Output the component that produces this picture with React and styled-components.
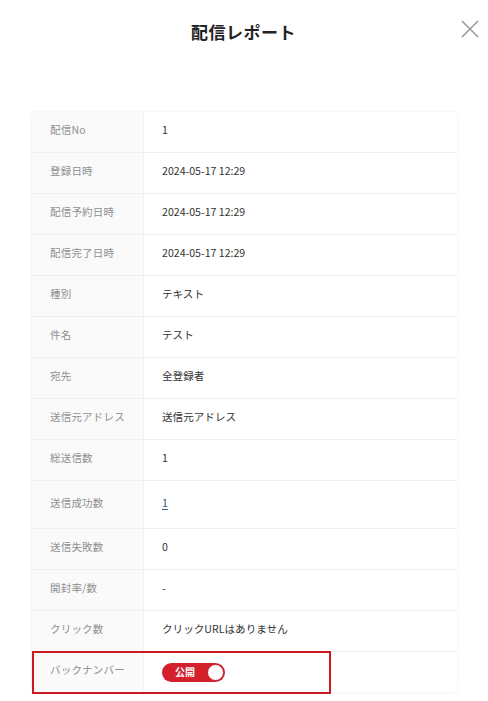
import React from 'react'
import styled, { createGlobalStyle } from 'styled-components'

const GlobalStyle = createGlobalStyle`
   body {
      margin: 0;
      background: #fff;
      font-family: "Noto Sans CJK JP", "Noto Sans", sans-serif;
      color: #333;
   }
`

const rows = [
   { label: '配信No', value: '1' },
   { label: '登録日時', value: '2024-05-17 12:29' },
   { label: '配信予約日時', value: '2024-05-17 12:29' },
   { label: '配信完了日時', value: '2024-05-17 12:29' },
   { label: '種別', value: 'テキスト' },
   { label: '件名', value: 'テスト' },
   { label: '宛先', value: '全登録者' },
   { label: '送信元アドレス', value: '送信元アドレス' },
   { label: '総送信数', value: '1' },
   { label: '送信成功数', value: '1', link: true },
   { label: '送信失敗数', value: '0' },
   { label: '開封率/数', value: '-' },
   { label: 'クリック数', value: 'クリックURLはありません' }
]

const App = () => (
   <Page>
      <GlobalStyle />
      <Header>
         <Title>配信レポート</Title>
         <Close aria-label="close">
            <svg width="18" height="18" viewBox="0 0 18 18">
               <path d="M1 1 L17 17 M17 1 L1 17" stroke="#9a9a9a" strokeWidth="1.6" fill="none" />
            </svg>
         </Close>
      </Header>
      <Card>
         {rows.map(r => (
            <Row key={r.label} tall={r.link}>
               <Label>{r.label}</Label>
               <Value>{r.link ? <ValueLink href="#">{r.value}</ValueLink> : r.value}</Value>
            </Row>
         ))}
         <Row last>
            <Label>バックナンバー</Label>
            <Value>
               <Toggle>
                  <ToggleText>公開</ToggleText>
                  <Knob />
               </Toggle>
            </Value>
            <Highlight />
         </Row>
      </Card>
   </Page>
)

const Page = styled.div`
   width: 488px;
   min-height: 701px;
   box-sizing: border-box;
   padding: 0 31px 0 32px;
`

const Header = styled.div`
   position: relative;
   height: 64px;
   display: flex;
   align-items: center;
   justify-content: center;
   margin-bottom: 48px;
`

const Title = styled.h1`
   margin: 0 0 2px;
   font-size: 17px;
   font-weight: 700;
   color: #222;
   letter-spacing: 0.5px;
   transform: translateX(-1px);
`

const Close = styled.div`
   position: absolute;
   right: -22px;
   top: 19px;
   width: 18px;
   height: 18px;
`

const Card = styled.div`
   border-radius: 4px;
   box-shadow: 0 0 3px rgba(0, 0, 0, 0.1);
`

const Row = styled.div`
   position: relative;
   display: grid;
   grid-template-columns: 112px 1fr;
   height: ${props => (props.tall ? '47px' : '40px')};
   border-bottom: ${props => (props.last ? 'none' : '1px solid #efefef')};
`

const Label = styled.div`
   display: flex;
   align-items: center;
   padding: 0 0 3px 18px;
   background: #fafafa;
   border-right: 1px solid #f2f2f2;
   font-size: 10.5px;
   line-height: 1;
   color: #8f8f8f;
   letter-spacing: 0.2px;
`

const Value = styled.div`
   display: flex;
   align-items: center;
   padding: 0 0 3px 18px;
   font-size: 10.6px;
   line-height: 1;
   color: #333;
`

const ValueLink = styled.a`
   color: #2c5b86;
   text-decoration: underline;
   text-underline-offset: 2px;
`

const Toggle = styled.div`
   display: flex;
   align-items: center;
   justify-content: space-between;
   width: 63px;
   height: 19px;
   margin-top: 3px;
   box-sizing: border-box;
   padding: 0 1px 0 13px;
   border-radius: 10px;
   background: #d3202c;
`

const ToggleText = styled.span`
   color: #fff;
   font-size: 10px;
   font-weight: 700;
`

const Knob = styled.span`
   width: 17px;
   height: 17px;
   box-sizing: border-box;
   border-radius: 50%;
   background: #fff;
   border: 1px solid #c81c28;
`

const Highlight = styled.div`
   position: absolute;
   left: 0;
   top: -1px;
   bottom: -2px;
   width: 299px;
   border: 2.5px solid #cc1820;
   box-sizing: border-box;
   pointer-events: none;
`

export default App
